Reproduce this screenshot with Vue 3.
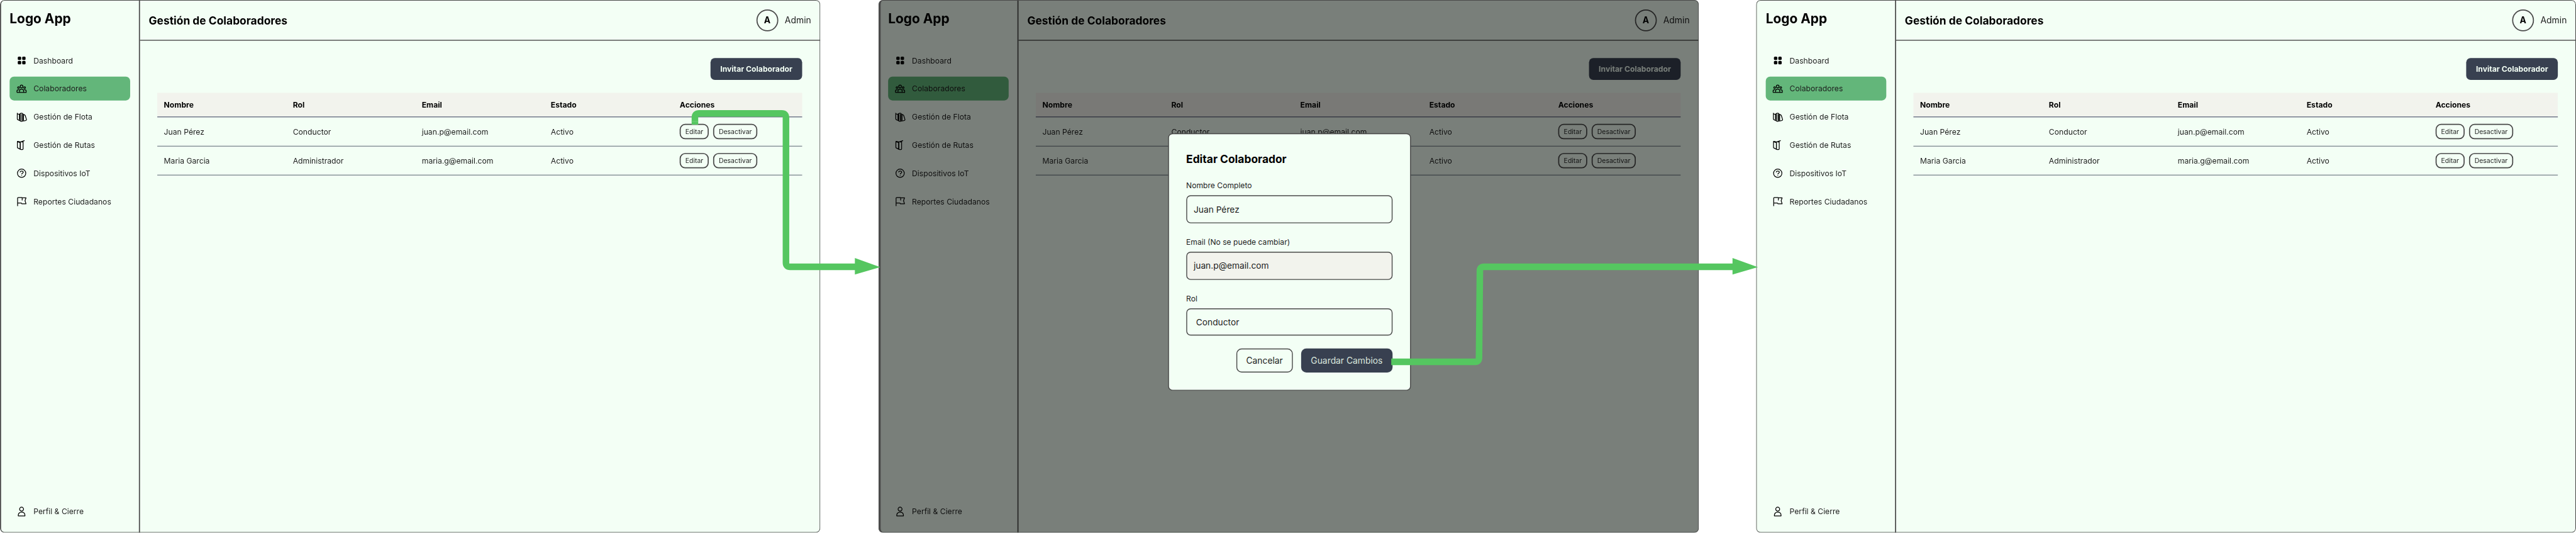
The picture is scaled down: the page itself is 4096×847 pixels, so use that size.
<script setup>
const screens = [
  { id: 'list', modal: false },
  { id: 'edit', modal: true },
  { id: 'result', modal: false },
]

const nav = [
  { label: 'Dashboard', icon: 'grid' },
  { label: 'Colaboradores', icon: 'people', active: true },
  { label: 'Gestión de Flota', icon: 'fleet' },
  { label: 'Gestión de Rutas', icon: 'route' },
  { label: 'Dispositivos IoT', icon: 'help' },
  { label: 'Reportes Ciudadanos', icon: 'flag' },
  { label: 'Perfil & Cierre', icon: 'person', last: true },
]

// Line icons on a 25 x 25 grid
const icons = {
  people: [
    'M9.2 7.4a3.1 3.2 0 1 0 6.2 0a3.1 3.2 0 1 0-6.2 0z',
    'M3.3 10.2a2 2.1 0 1 0 4 0a2 2.1 0 1 0-4 0z',
    'M17.3 10.2a2 2.1 0 1 0 4 0a2 2.1 0 1 0-4 0z',
    'M1.8 21.2h21v-3c0-2-1.2-3.2-3-3.2h-2.4M1.8 21.2v-3c0-2 1.2-3.2 3-3.2h2.4',
    'M7.6 21v-2.4c0-3 1.9-4.9 4.7-4.9s4.7 1.9 4.7 4.9V21',
  ],
  fleet: [
    'M2.5 4v13.2c0 .8.4 1.3 1.1 1.6l5.4 2.6V7.2L3.6 6C2.9 5.8 2.5 5 2.5 4z',
    'M7.4 18.5V6.6M9.2 21V6.2c0-1.5 1.1-2.3 2.9-2.3s2.9.8 2.9 2.3V21c0 1.1-1.1 1.6-2.9 1.6S9.2 22.1 9.2 21z',
    'M12.9 6v15M15 6.2l3.8 1.5c1 .4 1.5 1 1.9 2l2.6 8c.7 2-.3 3-2.3 3.4L15 22',
    'M7.4 6L10 4.6M16.8 7.5v13.3',
  ],
  route: [
    'M2.7 4.6v13c0 .7.3 1.1 1 1.4l5.6 2.8V6.8L3.5 4.9',
    'M2.7 4.6c0-.8.7-1 1.6-.7l5.2 1.5L19.2 2.2',
    'M9.3 6.5V21c0 1.2 1.3 1.7 3.2 1.7s3.3-.6 3.3-1.9V4.2M12.5 6.3l3.3-2.5',
  ],
  help: [
    'M2.9 12.2a9.5 9.5 0 1 0 19 0a9.5 9.5 0 1 0-19 0z',
    'M8.7 10c.5-1.9 1.9-2.8 3.8-2.8 2.1 0 3.6 1.1 3.6 2.8 0 2.3-3.3 2.3-3.5 4.7M12.5 16.6v1.5',
  ],
  flag: [
    'M3.2 22.2V4.3c0-1.1.6-1.7 1.7-1.7h8.8M3.2 15.3h8c1 0 1.6.6 1.6 1.7h9.7l-2.3-7 2.3-6.7h-8.8V9.3',
  ],
  person: [
    'M7.8 7.5a4.5 4.5 0 1 0 9 0a4.5 4.5 0 1 0-9 0z',
    'M4.7 23v-1.3c0-4.3 3-7.3 7.6-7.3s7.7 3 7.7 7.3V23z',
  ],
}

const columns = ['Nombre', 'Rol', 'Email', 'Estado', 'Acciones']
const rows = [
  ['Juan Pérez', 'Conductor', 'juan.p@email.com', 'Activo'],
  ['Maria Garcia', 'Administrador', 'maria.g@email.com', 'Activo'],
]

const fields = [
  { label: 'Nombre Completo', value: 'Juan Pérez', kind: 'plain' },
  { label: 'Email (No se puede cambiar)', value: 'juan.p@email.com', kind: 'locked' },
  { label: 'Rol', value: 'Conductor', kind: 'select' },
]
</script>

<template>
  <div class="viewport">
    <div class="board">
      <section v-for="s in screens" :key="s.id" class="screen" :class="s.id">
        <aside class="sidebar">
          <div class="logo">Logo App</div>
          <nav class="nav">
            <div v-for="n in nav" :key="n.label" class="item" :class="{ active: n.active, last: n.last }">
              <svg class="icon" viewBox="0 0 25 25">
                <template v-if="n.icon === 'grid'">
                  <rect x="3.7" y="3.7" width="7.7" height="7.7" rx="2.2" />
                  <rect x="13.7" y="3.7" width="7.7" height="7.7" rx="2.2" />
                  <rect x="3.7" y="13.7" width="7.7" height="7.7" rx="2.2" />
                  <rect x="13.7" y="13.7" width="7.7" height="7.7" rx="2.2" />
                </template>
                <g v-else class="line">
                  <path v-for="d in icons[n.icon]" :key="d" :d="d" />
                </g>
              </svg>
              <span>{{ n.label }}</span>
            </div>
          </nav>
        </aside>
        <div class="main">
          <header class="topbar">
            <h1>Gestión de Colaboradores</h1>
            <div class="user">
              <span class="avatar">A</span>
              <span>Admin</span>
            </div>
          </header>
          <div class="content">
            <button class="invite">Invitar Colaborador</button>
            <div class="table">
              <div class="row head">
                <div v-for="c in columns" :key="c" class="cell">{{ c }}</div>
              </div>
              <div v-for="r in rows" :key="r[0]" class="row">
                <div v-for="(c, i) in r" :key="i" class="cell">{{ c }}</div>
                <div class="cell actions">
                  <button class="chip">Editar</button>
                  <button class="chip wide">Desactivar</button>
                </div>
              </div>
            </div>
          </div>
        </div>
        <div v-if="s.modal" class="overlay">
          <div class="modal">
            <h2>Editar Colaborador</h2>
            <div v-for="f in fields" :key="f.label" class="field" :class="f.kind">
              <div class="label">{{ f.label }}</div>
              <div class="input">{{ f.value }}</div>
            </div>
            <div class="buttons">
              <button class="btn cancel">Cancelar</button>
              <button class="btn save">Guardar Cambios</button>
            </div>
          </div>
        </div>
        <div class="frame"></div>
      </section>

      <svg class="flow" viewBox="0 0 5888 1217">
        <path class="wire" d="M1588.4 284.5V268.5Q1588.4 259 1598 259H1787Q1796.5 259 1796.5 268.5V600Q1796.5 609.5 1806 609.5H1955" />
        <path class="seam" d="M1580.9 277.5h15" />
        <path class="tip" d="M1954 589.3L2012 610.2L1954 627z" />
        <path class="wire" d="M3180 826.5H3371.5Q3380.5 826.5 3380.6 817L3382.6 618.5Q3382.7 609.5 3392 609.5H3961" />
        <path class="tip" d="M3960 589.3L4018 610.2L3960 627z" />
      </svg>
    </div>
  </div>
</template>

<style>
body {
  margin: 0;
  background: #fff;
}
</style>

<style scoped>
.viewport {
  width: 4096px;
  height: 847px;
  overflow: hidden;
  font-family: Inter, "Liberation Sans", sans-serif;
  background: #fff;
}
/* Doubled by zoom, then scaled back, so that half-pixel strokes keep their weight */
.board {
  position: relative;
  zoom: 2;
  width: 5888px;
  height: 1217px;
  display: grid;
  grid-template-columns: 2008px 2006px 1874px;
  transform: scale(0.347826);
  transform-origin: 0 0;
}
.screen {
  position: relative;
  display: flex;
  width: 1875px;
  height: 1217px;
  background: #f3fff5;
  border-radius: 10px;
  overflow: hidden;
  color: #1c1c1c;
}
.result { width: 1874px; }
.frame {
  position: absolute;
  inset: 0;
  border: 1.5px solid #4a4a4a;
  border-left-width: 2.5px;
  border-radius: 10px;
}
.edit .frame { border-left-width: 5px; }
.result .frame { border-left-width: 1.5px; }

.sidebar {
  flex: none;
  box-sizing: border-box;
  width: 320px;
  padding: 22.5px 20px 21.5px 22px;
  border-right: 2.5px solid #4a4a4a;
  display: flex;
  flex-direction: column;
}
.logo {
  height: 38px;
  line-height: 38px;
  font-size: 30px;
  font-weight: 700;
  color: #000;
  margin-bottom: 50px;
}
.nav {
  flex: 1;
  display: flex;
  flex-direction: column;
  gap: 10px;
}
.item {
  height: 54.6px;
  display: flex;
  align-items: center;
  gap: 14.5px;
  padding-left: 15px;
  border-radius: 10px;
  font-size: 17.5px;
  line-height: 22px;
  white-space: nowrap;
}
.item.active { background: #63b67a; }
.item.last { margin-top: auto; }
.icon {
  width: 25px;
  height: 25px;
  flex: none;
}
.line {
  fill: none;
  stroke: #000;
  stroke-width: 1.8;
  stroke-linejoin: round;
}

.main {
  flex: 1;
  min-width: 0;
}
.topbar {
  box-sizing: border-box;
  height: 93px;
  padding: 1.5px 21px 0 20px;
  border-bottom: 2px solid #484848;
  display: flex;
  align-items: center;
  justify-content: space-between;
}
h1, h2 {
  margin: 0;
  font-size: 25px;
  line-height: 30px;
  font-weight: 700;
  color: #000;
}
.user {
  display: flex;
  align-items: center;
  gap: 15px;
  font-size: 20px;
  line-height: 24px;
}
.avatar {
  box-sizing: border-box;
  width: 50px;
  height: 50px;
  border: 2.5px solid #4a4a4a;
  border-radius: 50%;
  display: flex;
  align-items: center;
  justify-content: center;
  font-weight: 700;
  color: #000;
}
.content {
  padding: 39.5px 41.5px 0 39.6px;
  display: flex;
  flex-direction: column;
}
button {
  font-family: inherit;
  margin: 0;
  padding: 0;
  box-sizing: border-box;
  display: flex;
  align-items: center;
  justify-content: center;
  white-space: nowrap;
}
.invite {
  align-self: flex-end;
  width: 209.5px;
  height: 50px;
  border: 0;
  border-radius: 10px;
  background: #384050;
  color: #f3fff5;
  font-size: 17.5px;
  font-weight: 700;
  margin-bottom: 29.5px;
}
.row {
  box-sizing: border-box;
  height: 66px;
  display: grid;
  grid-template-columns: repeat(5, 1fr);
  align-items: center;
  border-bottom: 2px solid #848e96;
  font-size: 17.5px;
  line-height: 22px;
}
.row.head {
  height: 56px;
  background: #f2f3ed;
  border-bottom-color: #6b7286;
  font-weight: 700;
  color: #000;
}
.row.head + .row { height: 67px; }
.cell { padding-left: 15px; }
.actions {
  display: flex;
  gap: 10px;
}
.chip {
  width: 66.5px;
  height: 35px;
  border: 2.5px solid #4a4a4a;
  border-radius: 12.5px;
  background: transparent;
  color: #1c1c1c;
  font-size: 15px;
}
.chip.wide { width: 101px; }

.overlay {
  position: absolute;
  inset: 0;
  background: rgba(0, 0, 0, 0.5);
  display: flex;
  justify-content: center;
  align-items: flex-start;
  padding: 304.5px 0 0 3.5px;
}
.modal {
  box-sizing: border-box;
  width: 555px;
  height: 588px;
  padding: 42.5px 40px 0 39.5px;
  border: 2px solid #4a4a4a;
  border-radius: 10px;
  background: #f3fff5;
}
h2 { margin-bottom: 33.3px; }
.label {
  font-size: 17.4px;
  line-height: 22px;
}
.input {
  box-sizing: border-box;
  height: 64px;
  margin-top: 11.5px;
  padding-left: 15px;
  border: 2px solid #484848;
  border-radius: 10px;
  font-size: 19.8px;
  line-height: 61px;
}
.plain { margin-bottom: 31.7px; }
.locked { margin-bottom: 31.3px; }
.select { margin-bottom: 29.5px; }
.locked .input {
  height: 64.5px;
  background: #f2f3ed;
}
.select .input {
  height: 62px;
  line-height: 58px;
  padding-left: 20.5px;
}
.buttons {
  display: flex;
  justify-content: flex-end;
  gap: 19px;
}
.btn {
  height: 55px;
  border-radius: 12px;
  font-size: 19.9px;
}
.cancel {
  width: 129px;
  border: 2px solid #484848;
  background: transparent;
  color: #1c1c1c;
}
.save {
  width: 209px;
  border: 0;
  background: #384050;
  color: #dbe7de;
}

.flow {
  position: absolute;
  inset: 0;
  width: 5888px;
  height: 1217px;
}
.wire {
  fill: none;
  stroke: #55c660;
  stroke-width: 15;
}
.tip { fill: #55c660; }
.seam {
  stroke: #f3fff5;
  stroke-width: 0.7;
  opacity: 0.4;
}
</style>
